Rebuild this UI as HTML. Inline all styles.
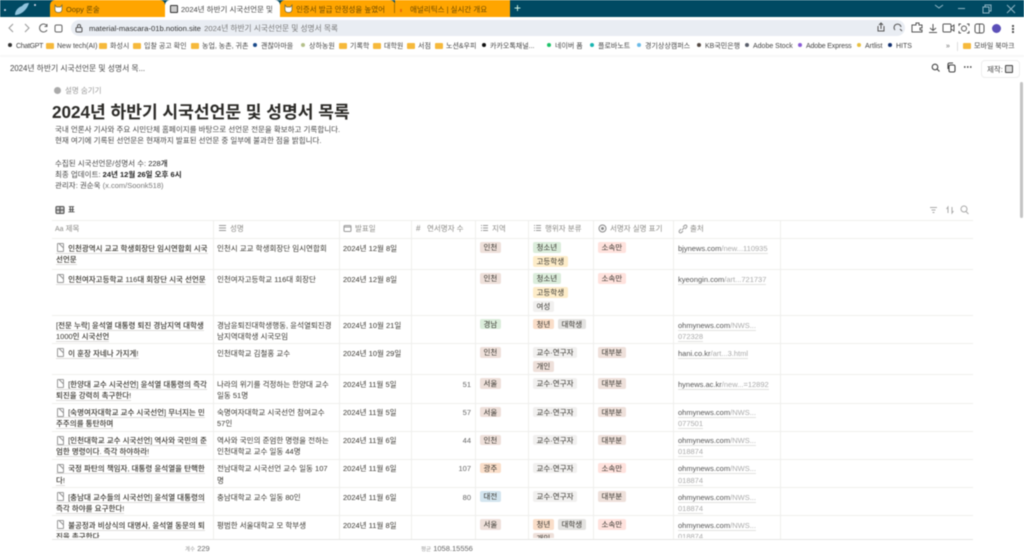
<!DOCTYPE html>
<html lang="ko"><head><meta charset="utf-8"><title>2024년 하반기 시국선언문 및 성명서 목록</title>
<style>
*{box-sizing:border-box}
html,body{margin:0;padding:0;width:1024px;height:555px;overflow:hidden;background:#fff}
body{font-family:"Liberation Sans","Noto Sans CJK KR",sans-serif;color:#37352f;font-size:7.5px;filter:blur(.4px)}
.a{position:absolute;white-space:nowrap}
.tab{position:absolute;top:0;height:17px;background:#ffa500;color:#6b4a00;font-size:7.500px;line-height:19px}
.bm{position:absolute;top:42px;font-size:7px;line-height:10px;color:#444;white-space:nowrap}
.d{display:inline-block;width:4px;height:4px;border-radius:50%;margin-right:4px;vertical-align:1px}
.f{display:inline-block;width:8px;height:6px;background:#f6b93b;border-radius:1px;margin-right:3px;vertical-align:-0.5px}
.row{position:absolute;left:52px;width:921px;border-bottom:1px solid #efefed;overflow:hidden}
.c{position:absolute;top:0;white-space:nowrap;line-height:11.3px;padding-top:3.5px}
.t{left:4px;font-weight:500;color:#37352f}
.t span{border-bottom:1px solid #dedddb}
.i{display:inline-block;width:7px;height:9px;border:1px solid #999;border-radius:1px;margin:0 2px 0 1px;vertical-align:-1.5px;background:linear-gradient(225deg,#fff 2px,#999 2px,#999 3px,transparent 3px)}
.m{left:165px}
.dt{left:291px}
.n{left:359px;width:60px;text-align:right;color:#666}
.tg{position:absolute;height:10.5px;line-height:11.5px;padding:0 3.5px;border-radius:2px;font-size:7.5px;white-space:nowrap;color:#37352f}
.br{background:#eee0da}.gr{background:#dbeddb}.or{background:#fadec9}.bl{background:#d3e5ef}.ye{background:#fdecc8}.gy{background:#f1f0ef}.dg{background:#e3e2e0}.re{background:#ffe2dd}
.u{left:626px;color:#555}
.u span{border-bottom:1px solid #e2e2e0}
.u i{font-style:normal;color:#aaa}
.v{position:absolute;width:1px;top:220px;height:319px;background:#efefed}
.h{position:absolute;top:223px;font-size:7.5px;color:#8a8985;white-space:nowrap;line-height:12px}
</style></head>
<body>
<!-- tab strip -->
<div class="a" style="left:0;top:0;width:1024px;height:17px;background:#004a63"></div>
<svg class="a" style="left:0;top:0" width="50" height="17"><path d="M15 15C21 15 27 10 29 3C24 3 23 5 22 6C19 7 15 10 15 15Z" fill="#8fc3dc"/><circle cx="5" cy="10" r="1" fill="#dde"/><circle cx="35" cy="5" r="1" fill="#dde"/></svg>
<div class="tab" style="left:50px;width:115px;border-radius:5px 5px 0 0;padding-left:16px">Oopy 론술</div>
<svg class="a" style="left:54px;top:4px" width="9" height="9"><path d="M1 1L2.500 3H6.500L8 1V5.500C8 7.500 6.500 8.500 4.500 8.500S1 7.500 1 5.500Z" fill="#fff" stroke="#664" stroke-width=".7"/></svg>
<div class="tab" style="left:165px;width:115px;background:#fff;color:#444;padding-left:16px;overflow:hidden;border-radius:5px 5px 0 0">2024년 하반기 시국선언문 및</div>
<div class="a" style="left:170px;top:5px;width:8px;height:8px;background:#ccc;border:1.200px solid #333;border-radius:1px"></div>
<div class="tab" style="left:280px;width:115px;padding-left:16px;overflow:hidden;border-radius:5px 5px 0 0">인증서 발급 안정성을 높였어</div>
<svg class="a" style="left:284px;top:4px" width="9" height="9"><path d="M1 1L2.500 3H6.500L8 1V5.500C8 7.500 6.500 8.500 4.500 8.500S1 7.500 1 5.500Z" fill="#fff" stroke="#664" stroke-width=".7"/></svg>
<div class="tab" style="left:395px;width:115px;padding-left:15px;overflow:hidden">애널리틱스 | 실시간 개요</div>
<div class="a" style="left:394px;top:4px;width:1px;height:9px;background:#a77200"></div>
<div class="a" style="left:400px;top:9px;width:1.500px;height:3px;background:#e8710a"></div>
<div class="a" style="left:402.500px;top:7px;width:1.500px;height:5px;background:#f9ab00"></div>
<div class="a" style="left:514px;top:1px;color:#dfe;font-size:12px;line-height:15px">+</div>
<svg class="a" style="left:930px;top:0" width="94" height="17" fill="none" stroke="#8fb4c3" stroke-width="1"><path d="M5 5L9 8L13 5"/><path d="M28 8.500H35"/><path d="M53 7H59V13H53ZM55 7V5H61V11H59"/><path d="M77 5L85 13M85 5L77 13"/></svg>

<!-- toolbar -->
<svg class="a" style="left:0;top:18px" width="70" height="19" fill="none" stroke="#666" stroke-width="1"><path d="M13 6L9 10L13 14" stroke="#999"/><path d="M25 6L29 10L25 14" stroke="#999"/><path d="M47 8A4 4 0 1 0 47 12M47 6V8.500H44.500"/><rect x="55" y="7" width="7" height="7" rx="1.500"/></svg>
<div class="a" style="left:71px;top:20px;width:834px;height:16px;background:#e9edf3;border-radius:8px"></div>
<svg class="a" style="left:74px;top:23px" width="10" height="10" fill="none" stroke="#555"><rect x="2" y="4.500" width="6" height="4.500" rx="1"/><path d="M3.500 4.500V3A1.500 1.500 0 0 1 6.500 3V4.500"/></svg>
<div class="a" style="left:89px;top:23.500px;font-size:7.700px;line-height:10px;color:#333">material-mascara-01b.notion.site <span style="color:#777;margin-left:1px">2024년 하반기 시국선언문 및 성명서 목록</span></div>
<svg class="a" style="left:870px;top:20px" width="125" height="17" fill="none" stroke="#555" stroke-width="1"><path d="M8 6V11H14V6M11 3V9M9 5L11 3L13 5"/><path d="M25 10A3.500 3.500 0 1 1 31 7M30 9L32 11"/><path d="M42 5H46V3H49V5H52V8H50V10H52V12H42Z"/><path d="M63 4V10M60 8L63 10.500L66 8M59 12.500H67"/><rect x="73" y="4" width="8" height="8" rx="1"/><path d="M81 7L84 5V11L81 9"/><circle cx="94" cy="8.500" r="2.500"/><path d="M89 6V4H91M97 4H99V6M99 11V13H97M91 13H89V11"/><rect x="105" y="4" width="9" height="9" rx="2"/><path d="M109.500 4V13"/></svg>
<div class="a" style="left:991.500px;top:23.500px;width:9px;height:9px;border-radius:50%;background:#5b4fb8"></div>
<div class="a" style="left:1012px;top:25px;width:1.500px;height:1.500px;background:#555;box-shadow:0 3px 0 #555,0 6px 0 #555"></div>

<!-- bookmarks -->
<div class="bm" style="left:8px;letter-spacing:-.3px"><span class="d" style="background:#333"></span>ChatGPT</div>
<div class="bm" style="left:46px"><span class="f"></span>New tech(AI)</div>
<div class="bm" style="left:99px"><span class="f"></span>화성시</div>
<div class="bm" style="left:133px"><span class="f"></span>입찰 공고 확인</div>
<div class="bm" style="left:191px"><span class="f"></span>농업, 농촌, 귀촌</div>
<div class="bm" style="left:253px"><span class="d" style="background:#1a4a8a"></span>괜찮아마을</div>
<div class="bm" style="left:301px"><span class="d" style="background:#b5c08a"></span>상하농원</div>
<div class="bm" style="left:339px"><span class="f"></span>기록학</div>
<div class="bm" style="left:373px"><span class="f"></span>대학원</div>
<div class="bm" style="left:407px"><span class="f"></span>서점</div>
<div class="bm" style="left:435px"><span class="f"></span>노션&amp;우피</div>
<div class="bm" style="left:482px"><span class="d" style="background:#111"></span>카카오톡채널...</div>
<div class="bm" style="left:547px"><span class="d" style="background:#1ec36a"></span>네이버 폼</div>
<div class="bm" style="left:590px"><span class="d" style="background:#18b5b0"></span>플로바노트</div>
<div class="bm" style="left:637px"><span class="d" style="background:#6bbbe8"></span>경기상상캠퍼스</div>
<div class="bm" style="left:697px"><span class="d" style="background:#554b45"></span>KB국민은행</div>
<div class="bm" style="left:745px"><span class="d" style="background:#5a5f6b"></span>Adobe Stock</div>
<div class="bm" style="left:798px;letter-spacing:-.15px"><span class="d" style="background:#8a5cd6"></span>Adobe Express</div>
<div class="bm" style="left:857px"><span class="d" style="background:#e8c040"></span>Artlist</div>
<div class="bm" style="left:888px"><span class="d" style="background:#12306e"></span>HITS</div>
<div class="bm" style="left:946px;color:#666">»</div>
<div class="a" style="left:957px;top:42px;width:1px;height:9px;background:#ddd"></div>
<div class="bm" style="left:963px"><span class="f"></span>모바일 북마크</div>
<div class="a" style="left:0;top:55px;width:1024px;height:2px;background:#f7f7f7"></div>

<!-- notion top bar -->
<div class="a" style="left:10px;top:64px;font-size:7.800px;line-height:10px;color:#444">2024년 하반기 시국선언문 및 성명서 목...</div>
<svg class="a" style="left:928px;top:60px" width="50" height="16" fill="none" stroke="#444" stroke-width="1.100"><circle cx="7" cy="7" r="2.800"/><path d="M9 9L11.500 11.500"/><rect x="21" y="5" width="6" height="7" rx="1.500"/><path d="M20 9V4.500A1.500 1.500 0 0 1 21.500 3H25"/><path d="M36 7H37.500M39 7H40.500M42 7H43.500" stroke-width="1.400"/></svg>
<div class="a" style="left:981px;top:60px;width:39px;height:18px;border:1px solid #eee;border-radius:4px;font-size:7.500px;line-height:17px;padding-left:5px;color:#444">제작:</div>
<div class="a" style="left:1004.500px;top:65px;width:8px;height:8px;border:1.200px solid #444;border-radius:1px;background:#ddd"></div>
<div class="a" style="left:1020px;top:82px;width:3px;height:136px;background:#c4c4c4;border-radius:2px"></div>

<!-- header copy -->
<div class="a" style="left:54px;top:87px;width:7px;height:7px;border-radius:50%;background:#aaa"></div>
<div class="a" style="left:65px;top:85px;font-size:7.500px;line-height:11px;color:#999">설명 숨기기</div>
<div class="a" style="left:52px;top:101px;font-size:17.100px;line-height:24px;font-weight:700;color:#2b2a27">2024년 하반기 시국선언문 및 성명서 목록</div>
<div class="a" style="left:55px;top:124px;line-height:11.300px;color:#444">국내 언론사 기사와 주요 시민단체 홈페이지를 바탕으로 선언문 전문을 확보하고 기록합니다.<br>현재 여기에 기록된 선언문은 현재까지 발표된 선언문 중 일부에 불과한 점을 밝힙니다.<br><br>수집된 시국선언문/성명서 수: <b style="font-weight:500;color:#222">228개</b><br><b style="font-weight:400">최종 업데이트:</b> <b style="font-weight:700;color:#222">24년 12월 26일 오후 6시</b><br>관리자: 권순욱 <span style="color:#777">(x.com/Soonk518)</span></div>
<svg class="a" style="left:55px;top:205px" width="10" height="10" fill="none" stroke="#555" stroke-width="1.100"><rect x="1" y="1.500" width="8" height="7" rx="1" fill="#ccc"/><path d="M5 1.500V8.500M1 5H9"/></svg>
<div class="a" style="left:68px;top:205px;font-weight:700;line-height:10px;color:#444">표</div>
<svg class="a" style="left:928px;top:203px" width="46" height="14" fill="none" stroke="#aaa"><path d="M2 4.500H9M3.500 7H7.500M4.500 9.500H6.500"/><path d="M20 10V4L18.500 6M24 4V10L25.500 8"/><circle cx="36" cy="6" r="3"/><path d="M38 8.500L40.500 11"/></svg>

<!-- table -->
<div class="a" style="left:52px;top:220px;width:921px;height:1px;background:#efefed"></div>
<div class="a" style="left:52px;top:238px;width:921px;height:1px;background:#efefed"></div>
<div class="v" style="left:213px"></div><div class="v" style="left:339px"></div><div class="v" style="left:411px"></div><div class="v" style="left:475px"></div><div class="v" style="left:528px"></div><div class="v" style="left:593px"></div><div class="v" style="left:673px"></div><div class="v" style="left:780px"></div>

<div class="h" style="left:55px"><span style="font-size:7px">Aa</span> 제목</div>
<svg class="a" style="left:218px;top:224px" width="9" height="9" stroke="#999"><path d="M1 1.500H8M1 4H8M1 6.500H8"/></svg><div class="h" style="left:230px">성명</div>
<svg class="a" style="left:343px;top:224px" width="9" height="9" fill="none" stroke="#999"><rect x="1" y="1.500" width="7" height="6" rx="1"/><path d="M1 3H8"/></svg><div class="h" style="left:355px">발표일</div>
<div class="h" style="left:416px;font-size:8px">#</div><div class="h" style="left:427px">연서명자 수</div>
<svg class="a" style="left:480px;top:224px" width="9" height="9" stroke="#999"><path d="M3 1.500H8M3 4H8M3 6.500H8M1 1.500H2M1 4H2M1 6.500H2"/></svg><div class="h" style="left:492px">지역</div>
<svg class="a" style="left:533px;top:224px" width="9" height="9" stroke="#999"><path d="M3 1.500H8M3 4H8M3 6.500H8M1 1.500H2M1 4H2M1 6.500H2"/></svg><div class="h" style="left:545px">행위자 분류</div>
<svg class="a" style="left:598px;top:224px" width="10" height="10" fill="none" stroke="#888"><circle cx="4.500" cy="4.500" r="3.500"/><circle cx="4.500" cy="4.500" r="1" fill="#888"/></svg><div class="h" style="left:610px">서명자 실명 표기</div>
<svg class="a" style="left:678px;top:224px" width="10" height="10" fill="none" stroke="#999"><path d="M4 6L6.500 3.500M3 5L1.500 6.500A1.400 1.400 0 0 0 3.500 8.500L5 7M5 3L6.500 1.500A1.400 1.400 0 0 1 8.500 3.500L7 5"/></svg><div class="h" style="left:690px">출처</div>

<div class="row" style="top:239px;height:31px">
<div class="c t"><span><i class="i"></i> 인천광역시 교교 학생회장단 임시연합회 시국</span><br><span>선언문</span></div>
<div class="c m">인천시 교교 학생회장단 임시연합회</div><div class="c dt">2024년 12월 8일</div>
<div class="tg br" style="left:428px;top:3px">인천</div><div class="tg gr" style="left:481px;top:3px">청소년</div><div class="tg ye" style="left:481px;top:17px">고등학생</div><div class="tg re" style="left:546px;top:3px">소속만</div>
<div class="c u"><span>bjynews.com<i>/new...110935</i></span></div></div>

<div class="row" style="top:270px;height:46px">
<div class="c t"><span><i class="i"></i> 인천여자고등학교 116대 회장단 시국 선언문</span></div>
<div class="c m">인천여자고등학교 116대 회장단</div><div class="c dt">2024년 12월 8일</div>
<div class="tg br" style="left:428px;top:3px">인천</div><div class="tg gr" style="left:481px;top:3px">청소년</div><div class="tg ye" style="left:481px;top:17px">고등학생</div><div class="tg gy" style="left:481px;top:31px">여성</div><div class="tg re" style="left:546px;top:3px">소속만</div>
<div class="c u"><span>kyeongin.com<i>/art...721737</i></span></div></div>

<div class="row" style="top:316px;height:28px">
<div class="c t"><span>[전문 누락] 윤석열 대통령 퇴진 경남지역 대학생</span><br><span>1000인 시국선언</span></div>
<div class="c m">경남윤퇴진대학생행동, 윤석열퇴진경<br>남지역대학생 시국모임</div><div class="c dt">2024년 10월 21일</div>
<div class="tg gr" style="left:428px;top:2.500px">경남</div><div class="tg or" style="left:481px;top:2.500px">청년</div><div class="tg dg" style="left:506px;top:2.500px">대학생</div>
<div class="c u"><span>ohmynews.com<i>/NWS...</i></span><br><span><i>072328</i></span></div></div>

<div class="row" style="top:344px;height:31px">
<div class="c t"><span><i class="i"></i> 이 훈장 자네나 가지게!</span></div>
<div class="c m">인천대학교 김철홍 교수</div><div class="c dt">2024년 10월 29일</div>
<div class="tg br" style="left:428px;top:3px">인천</div><div class="tg gy" style="left:481px;top:3px">교수·연구자</div><div class="tg br" style="left:481px;top:17px">개인</div><div class="tg br" style="left:546px;top:3px">대부분</div>
<div class="c u"><span>hani.co.kr<i>/art...3.html</i></span></div></div>

<div class="row" style="top:375px;height:28.500px">
<div class="c t"><span><i class="i"></i> [한양대 교수 시국선언] 윤석열 대통령의 즉각</span><br><span>퇴진을 강력히 촉구한다!</span></div>
<div class="c m">나라의 위기를 걱정하는 한양대 교수<br>일동 51명</div><div class="c dt">2024년 11월 5일</div><div class="c n">51</div>
<div class="tg br" style="left:428px;top:3px">서울</div><div class="tg gy" style="left:481px;top:3px">교수·연구자</div><div class="tg br" style="left:546px;top:3px">대부분</div>
<div class="c u"><span>hynews.ac.kr<i>/new...=12892</i></span></div></div>

<div class="row" style="top:403.500px;height:28.200px">
<div class="c t"><span><i class="i"></i> [숙명여자대학교 교수 시국선언] 무너지는 민</span><br><span>주주의를 통탄하며</span></div>
<div class="c m">숙명여자대학교 시국선언 참여교수<br>57인</div><div class="c dt">2024년 11월 5일</div><div class="c n">57</div>
<div class="tg br" style="left:428px;top:3px">서울</div><div class="tg gy" style="left:481px;top:3px">교수·연구자</div><div class="tg br" style="left:546px;top:3px">대부분</div>
<div class="c u"><span>ohmynews.com<i>/NWS...</i></span><br><span><i>077501</i></span></div></div>

<div class="row" style="top:431.700px;height:28.200px">
<div class="c t"><span><i class="i"></i> [인천대학교 교수 시국선언] 역사와 국민의 준</span><br><span>엄한 명령이다. 즉각 하야하라!</span></div>
<div class="c m">역사와 국민의 준엄한 명령을 전하는<br>인천대학교 교수 일동 44명</div><div class="c dt">2024년 11월 6일</div><div class="c n">44</div>
<div class="tg br" style="left:428px;top:3px">인천</div><div class="tg gy" style="left:481px;top:3px">교수·연구자</div><div class="tg br" style="left:546px;top:3px">대부분</div>
<div class="c u"><span>ohmynews.com<i>/NWS...</i></span><br><span><i>018874</i></span></div></div>

<div class="row" style="top:459.900px;height:28.200px">
<div class="c t"><span><i class="i"></i> 국정 파탄의 책임자, 대통령 윤석열을 탄핵한</span><br><span>다!</span></div>
<div class="c m">전남대학교 시국선언 교수 일동 107<br>명</div><div class="c dt">2024년 11월 6일</div><div class="c n">107</div>
<div class="tg or" style="left:428px;top:3px">광주</div><div class="tg gy" style="left:481px;top:3px">교수·연구자</div><div class="tg re" style="left:546px;top:3px">소속만</div>
<div class="c u"><span>ohmynews.com<i>/NWS...</i></span><br><span><i>018874</i></span></div></div>

<div class="row" style="top:488.100px;height:28.200px">
<div class="c t"><span><i class="i"></i> [충남대 교수들의 시국선언] 윤석열 대통령의</span><br><span>즉각 하야를 요구한다!</span></div>
<div class="c m">충남대학교 교수 일동 80인</div><div class="c dt">2024년 11월 6일</div><div class="c n">80</div>
<div class="tg bl" style="left:428px;top:3px">대전</div><div class="tg gy" style="left:481px;top:3px">교수·연구자</div><div class="tg br" style="left:546px;top:3px">대부분</div>
<div class="c u"><span>ohmynews.com<i>/NWS...</i></span><br><span><i>018874</i></span></div></div>

<div class="row" style="top:516.300px;height:22.200px;border-bottom:0">
<div class="c t"><span><i class="i"></i> 불공정과 비상식의 대명사, 윤석열 동문의 퇴</span><br><span>진을 촉구한다</span></div>
<div class="c m">평범한 서울대학교 모 학부생</div><div class="c dt">2024년 11월 8일</div>
<div class="tg br" style="left:428px;top:3px">서울</div><div class="tg or" style="left:481px;top:3px">청년</div><div class="tg dg" style="left:506px;top:3px">대학생</div><div class="tg br" style="left:481px;top:17px">개인</div><div class="tg re" style="left:546px;top:3px">소속만</div>
<div class="c u"><span>ohmynews.com<i>/NWS...</i></span><br><span><i>018874</i></span></div></div>

<div class="a" style="left:0;top:539px;width:1024px;height:16px;background:#fff"></div>
<div class="a" style="left:52px;top:538.500px;width:921px;height:1px;background:#e6e6e4"></div>
<div class="a" style="left:185px;top:543px;line-height:11px;color:#666;font-size:7.500px"><span style="font-size:5.500px;color:#999">계수</span> 229</div>
<div class="a" style="left:421px;top:543px;line-height:11px;color:#666;font-size:7.500px"><span style="font-size:5.500px;color:#999">평균</span> 1058.15556</div>
</body></html>
